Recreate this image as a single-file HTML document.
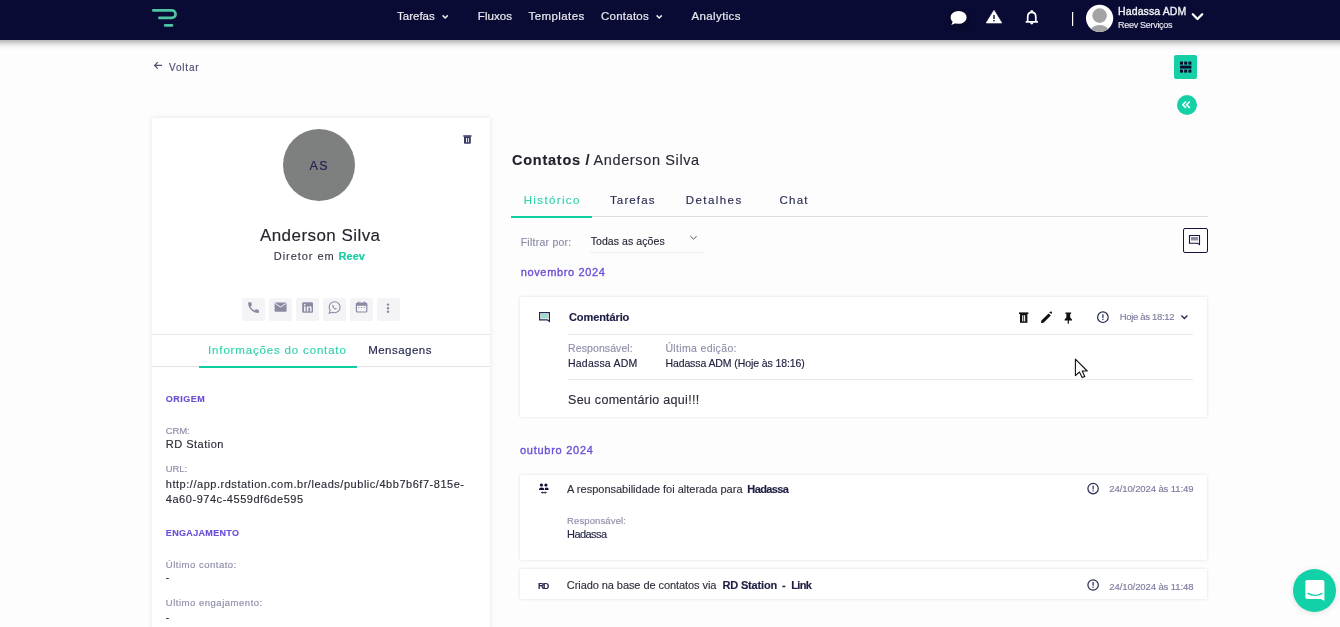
<!DOCTYPE html>
<html><head><meta charset="utf-8"><title>Reev - Anderson Silva</title>
<style>
*{margin:0;padding:0;box-sizing:border-box}
html,body{width:1340px;height:627px;overflow:hidden;background:#fdfdfd;font-family:"Liberation Sans",sans-serif}
.t{position:absolute;white-space:nowrap;line-height:1;-webkit-text-stroke-width:0.15px}
.abs{position:absolute}
svg{position:absolute;overflow:visible}
#nav{position:absolute;left:-30px;top:0;width:1400px;height:40px;background:#0a0b34;box-shadow:0 2px 7px rgba(0,0,0,0.4)}
.card{position:absolute;background:#fff;box-shadow:0 0 3px rgba(0,0,0,0.12)}
.btn{position:absolute;top:298px;width:23px;height:23px;background:#f4f4f6;border-radius:2px}
.hl{position:absolute;height:1px;background:#e4e4ea}
</style></head><body>
<div id="nav"></div>
<!-- logo -->
<svg width="1340" height="40" style="left:0;top:0">
  <path d="M153.3 10.4 H171.8 A3.75 3.75 0 0 1 171.8 17.9 H159.4" fill="none" stroke="#4ec4a2" stroke-width="2.7" stroke-linecap="round"/>
  <path d="M165.2 25.4 H172" fill="none" stroke="#4ec4a2" stroke-width="2.7" stroke-linecap="round"/>
  <!-- nav chevrons -->
  <path d="M442.6 15.4 L445.2 18 L447.8 15.4" fill="none" stroke="#e9e9f0" stroke-width="1.5"/>
  <path d="M656.6 15.4 L659.2 18 L661.8 15.4" fill="none" stroke="#e9e9f0" stroke-width="1.5"/>
  <!-- chat bubble -->
  <circle cx="958.5" cy="20.3" r="11.3" fill="#08092b"/>
  <ellipse cx="958.6" cy="17.4" rx="8" ry="6.4" fill="#fff"/>
  <path d="M953 21 L951.3 25 L957 22.5 Z" fill="#fff"/>
  <!-- warning -->
  <path d="M994 10.3 L1001.8 23 H986.2 Z" fill="#fff" stroke="#fff" stroke-width="0.6" stroke-linejoin="round"/>
  <rect x="993.3" y="15" width="1.4" height="4" fill="#0a0b34"/>
  <rect x="993.3" y="20" width="1.4" height="1.4" fill="#0a0b34"/>
  <!-- bell -->
  <path d="M1027.7 21.4 V17 C1027.7 14.1 1029.3 12.4 1031.75 12.4 C1034.2 12.4 1035.8 14.1 1035.8 17 V21.4" fill="none" stroke="#fff" stroke-width="1.7"/>
  <rect x="1025.5" y="21" width="12.6" height="1.8" rx="0.7" fill="#fff"/>
  <rect x="1030.4" y="10.2" width="2.8" height="2.6" rx="1" fill="#fff"/>
  <path d="M1030.2 22.6 H1033.3 A1.55 2 0 0 1 1030.2 22.6 Z" fill="#fff"/>
  <!-- separator -->
  <rect x="1072" y="12" width="1.2" height="14" fill="#fff"/>
  <!-- avatar -->
  <circle cx="1099.6" cy="18.3" r="13.6" fill="#fff"/>
  <circle cx="1099.6" cy="15.6" r="7.3" fill="#a4a4a4"/>
  <clipPath id="avc"><circle cx="1099.6" cy="18.3" r="13.6"/></clipPath>
  <ellipse cx="1099.6" cy="32" rx="9.5" ry="7" fill="#a4a4a4" clip-path="url(#avc)"/>
  <!-- big chevron -->
  <path d="M1192.8 14.3 L1197.5 19 L1202.2 14.3" fill="none" stroke="#fff" stroke-width="2.3" stroke-linecap="round" stroke-linejoin="round"/>
</svg>

<!-- top right buttons -->
<div class="abs" style="left:1174px;top:55px;width:23px;height:24px;background:#15d0a6;border-radius:2px"></div>
<svg width="24" height="24" style="left:1174px;top:55px">
  <rect x="6" y="6.6" width="3" height="3" fill="#0b0b30"/>
  <rect x="10.2" y="6.6" width="3" height="3" fill="#0b0b30"/>
  <rect x="14.4" y="6.6" width="3" height="3" fill="#0b0b30"/>
  <rect x="6" y="10.6" width="11.4" height="3" fill="#0b0b30"/>
  <rect x="6" y="14.6" width="3" height="3" fill="#0b0b30"/>
  <rect x="10.2" y="14.6" width="3" height="3" fill="#0b0b30"/>
  <rect x="14.4" y="14.6" width="3" height="3" fill="#0b0b30"/>
</svg>
<svg width="22" height="22" style="left:1176px;top:94px">
  <circle cx="11" cy="11" r="10" fill="#15d0a6"/>
  <path d="M10 7.5 L6.8 10.7 L10 13.9 M13.8 7.5 L10.6 10.7 L13.8 13.9" fill="none" stroke="#fff" stroke-width="1.6"/>
</svg>

<!-- back arrow -->
<svg width="12" height="12" style="left:153px;top:59px">
  <path d="M9 6.4 H1.6 M4.8 3.2 L1.6 6.4 L4.8 9.6" fill="none" stroke="#4b4e70" stroke-width="1.2"/>
</svg>

<!-- left card -->
<div class="card" style="left:152px;top:118px;width:338px;height:520px;box-shadow:0 0 5px rgba(0,0,0,0.1)"></div>
<svg width="12" height="12" style="left:462px;top:134px">
  <rect x="1.2" y="1.2" width="8.4" height="1.5" rx="0.4" fill="#363a62"/>
  <path d="M2 2.5 H8.8 V8.8 Q8.8 9.7 7.9 9.7 H2.9 Q2 9.7 2 8.8 Z" fill="#363a62"/>
  <rect x="4" y="4" width="0.9" height="4.3" fill="#fff"/>
  <rect x="5.9" y="4" width="0.9" height="4.3" fill="#fff"/>
</svg>
<div class="abs" style="left:283px;top:129px;width:72px;height:72px;border-radius:50%;background:#7e7f7f"></div>
<div class="btn" style="left:242px"></div>
<div class="btn" style="left:269px"></div>
<div class="btn" style="left:296px"></div>
<div class="btn" style="left:323px"></div>
<div class="btn" style="left:350px"></div>
<div class="btn" style="left:377px"></div>
<svg width="200" height="30" style="left:230px;top:295px">
  <!-- phone -->
  <path transform="translate(16.3 5.4) scale(0.6)" d="M20.01 15.38c-1.23 0-2.42-.2-3.53-.56-.35-.12-.74-.03-1.01.24l-1.57 1.97c-2.83-1.35-5.48-3.9-6.89-6.83l1.95-1.66c.27-.28.35-.67.24-1.02-.37-1.11-.56-2.3-.56-3.53 0-.54-.45-.99-.99-.99H4.19C3.65 3 3 3.24 3 3.99 3 13.28 10.73 21 20.01 21c.71 0 .99-.63.99-1.18v-3.45c0-.54-.45-.99-.99-.99z" fill="#8a8aa2"/>
<g transform="translate(0 -1)">
  <!-- mail -->
  <rect x="44.6" y="8.6" width="12" height="9.2" rx="0.8" fill="#8a8aa2"/>
  <path d="M44.8 9.2 L50.6 13 L56.4 9.2" fill="none" stroke="#f4f4f6" stroke-width="1"/>
  <!-- linkedin -->
  <rect x="72.2" y="8.2" width="10.8" height="10.6" rx="1.2" fill="#8a8aa2"/>
  <rect x="74" y="12.4" width="1.5" height="5" fill="#f4f4f6"/>
  <circle cx="74.75" cy="10.6" r="0.85" fill="#f4f4f6"/>
  <path d="M76.8 12.4 H78.2 V13.2 C78.6 12.5 79.3 12.2 80 12.2 C81.2 12.2 81.6 13 81.6 14.2 V17.4 H80.1 V14.6 C80.1 14 79.9 13.6 79.3 13.6 C78.6 13.6 78.3 14.1 78.3 14.7 V17.4 H76.8 Z" fill="#f4f4f6"/>
  <!-- whatsapp -->
  <path d="M104.6 7.8 C101.5 7.8 99.2 10.2 99.2 13.2 C99.2 14.3 99.5 15.3 100.1 16.2 L99.2 19.2 L102.3 18.3 C103 18.7 103.8 18.8 104.6 18.8 C107.7 18.8 110 16.4 110 13.4 C110 10.3 107.7 7.8 104.6 7.8 Z" fill="none" stroke="#8a8aa2" stroke-width="1.1"/>
  <path d="M102.6 11 C102.3 11.3 102.2 11.7 102.3 12.2 C102.6 13.6 103.9 15 105.3 15.4 C105.8 15.5 106.3 15.4 106.6 15.1 L106.7 14.5 L105.6 13.9 L105.1 14.4 C104.4 14.1 103.8 13.5 103.5 12.8 L104 12.3 L103.4 11.1 Z" fill="#8a8aa2"/>
  <!-- calendar -->
  <rect x="126.4" y="9" width="10.4" height="9" rx="1" fill="none" stroke="#8a8aa2" stroke-width="1.2"/>
  <rect x="126.4" y="9" width="10.4" height="2.8" fill="#8a8aa2"/>
  <rect x="128.2" y="7.6" width="1.2" height="2" fill="#8a8aa2"/>
  <rect x="133.8" y="7.6" width="1.2" height="2" fill="#8a8aa2"/>
  <rect x="128.4" y="13" width="1" height="1" fill="#8a8aa2"/>
  <rect x="131.1" y="13" width="1" height="1" fill="#8a8aa2"/>
  <rect x="133.8" y="13" width="1" height="1" fill="#8a8aa2"/>
</g>
  <!-- dots -->
  <circle cx="158" cy="9.6" r="1.2" fill="#8a8aa2"/>
  <circle cx="158" cy="13.2" r="1.2" fill="#8a8aa2"/>
  <circle cx="158" cy="16.8" r="1.2" fill="#8a8aa2"/>
</svg>
<div class="hl" style="left:152px;top:334px;width:338px;background:#e6e6eb"></div>
<div class="hl" style="left:152px;top:366px;width:338px;background:#e3e3e8"></div>
<div class="abs" style="left:199px;top:366px;width:158px;height:2px;background:#0dcfa2"></div>

<!-- right column -->
<div class="hl" style="left:511px;top:216px;width:697px;background:#dcdce2"></div>
<div class="abs" style="left:511px;top:216px;width:81px;height:2px;background:#0dcfa2"></div>
<div class="hl" style="left:590px;top:252px;width:114px;background:#ededf1"></div>
<svg width="10" height="8" style="left:689px;top:234px">
  <path d="M1.3 2 L4.5 5.2 L7.7 2" fill="none" stroke="#55566e" stroke-width="1"/>
</svg>
<div class="abs" style="left:1183px;top:228px;width:25px;height:25px;border:1.3px solid #15163f;border-radius:2px"></div>
<svg width="14" height="12" style="left:1188px;top:234px">
  <path d="M1.5 1.5 H11.5 V10.6 L9.5 9.3 H1.5 Z" fill="none" stroke="#15163f" stroke-width="1.1"/>
  <rect x="3" y="3" width="7" height="3.5" fill="#8b8ca6"/>
</svg>

<!-- card comment -->
<div class="card" style="left:520px;top:297px;width:687px;height:120px"></div>
<svg width="14" height="12" style="left:538px;top:311px">
  <path d="M1.6 1.6 H11.4 V10.4 L9.2 8.8 H1.6 Z" fill="none" stroke="#24264f" stroke-width="1.2"/>
  <rect x="3" y="3" width="7" height="4.4" fill="#84e0c8"/>
  <rect x="3" y="4.4" width="7" height="1.6" fill="#b5d8d2"/>
</svg>
<div class="hl" style="left:568px;top:334px;width:625px;background:#e8e8ed"></div>
<div class="hl" style="left:568px;top:379px;width:625px;background:#e8e8ed"></div>
<svg width="200" height="16" style="left:1010px;top:310px">
  <!-- trash -->
  <rect x="9" y="2.4" width="9.4" height="1.6" fill="#111"/>
  <path d="M10 4 H17.4 V12.8 H10 Z" fill="#111"/>
  <rect x="12.2" y="5.2" width="1.1" height="6.2" fill="#fff"/>
  <rect x="14.1" y="5.2" width="1.1" height="6.2" fill="#fff"/>
  <!-- pencil -->
  <path d="M31 13 L31.4 10.6 L38.6 3.4 L40.8 5.6 L33.6 12.8 Z" fill="#111"/>
  <path d="M39.2 2.8 L40.2 1.8 C40.6 1.4 41.2 1.4 41.6 1.8 L41.8 2 C42.2 2.4 42.2 3 41.8 3.4 L41.4 3.8 Z" fill="#111"/>
  <!-- pin -->
  <path d="M55.4 2.4 H61.2 V3.8 H60.2 V7.6 L62 9.4 V10.4 H58.9 V13.8 H57.7 V10.4 H54.6 V9.4 L56.4 7.6 V3.8 H55.4 Z" fill="#111"/>
  <!-- info circle -->
  <circle cx="92.9" cy="7.2" r="5.3" fill="none" stroke="#272a52" stroke-width="1.2"/>
  <rect x="92.3" y="4.2" width="1.2" height="3.8" fill="#272a52"/>
  <rect x="92.3" y="8.8" width="1.2" height="1.2" fill="#272a52"/>
  <!-- chevron -->
  <path d="M171.4 5.5 L174.4 8.5 L177.4 5.5" fill="none" stroke="#272a52" stroke-width="1.4"/>
</svg>
<!-- cursor -->
<svg width="20" height="24" style="left:1070px;top:355px">
  <path d="M5.4 4.2 V20.6 L9.4 17 L12.2 22.6 L14.8 21.4 L12.2 16 H17.2 Z" fill="#fff" stroke="#111" stroke-width="1.1" stroke-linejoin="round"/>
</svg>

<!-- card 2 -->
<div class="card" style="left:520px;top:475px;width:687px;height:85px"></div>
<svg width="14" height="14" style="left:537px;top:482px">
  <circle cx="4.4" cy="3" r="1.6" fill="#0c0d36"/>
  <circle cx="8.9" cy="3" r="1.6" fill="#0c0d36"/>
  <path d="M2 8 C2 6.2 3 5.5 4.6 5.5 C6.2 5.5 7.2 6.2 7.2 8 Z" fill="#0c0d36"/>
  <path d="M7.8 8 C7.8 6.4 8.2 5.5 9.4 5.5 C10.8 5.5 11.6 6.2 11.6 8 Z" fill="#0c0d36"/>
  <path d="M4.6 10.6 H9.2 M5.5 9.7 L4.6 10.6 L5.5 11.5 M8.3 9.7 L9.2 10.6 L8.3 11.5" fill="none" stroke="#0c0d36" stroke-width="0.9"/>
</svg>

<!-- card 3 -->
<div class="card" style="left:520px;top:569px;width:687px;height:30px"></div>
<svg width="16" height="200" style="left:1086px;top:480px">
  <circle cx="7.1" cy="8.6" r="5.2" fill="none" stroke="#272a52" stroke-width="1.2"/>
  <rect x="6.5" y="5.6" width="1.2" height="3.8" fill="#272a52"/>
  <rect x="6.5" y="10.2" width="1.2" height="1.2" fill="#272a52"/>
  <circle cx="7.1" cy="105" r="5.2" fill="none" stroke="#272a52" stroke-width="1.2"/>
  <rect x="6.5" y="102" width="1.2" height="3.8" fill="#272a52"/>
  <rect x="6.5" y="106.6" width="1.2" height="1.2" fill="#272a52"/>
</svg>

<!-- intercom -->
<div class="abs" style="left:1293px;top:569px;width:43px;height:43px;border-radius:50%;background:#12d0a7;box-shadow:0 1px 6px rgba(0,0,0,0.12)"></div>
<svg width="24" height="24" style="left:1303px;top:578px">
  <path d="M4.2 2 H19.4 C20.6 2 21.4 2.8 21.4 4 V22.8 L17.6 21 H4.2 C3 21 2.4 20.2 2.4 19 V4 C2.4 2.8 3 2 4.2 2 Z" fill="#fff"/>
  <path d="M5 15.4 C8.6 18 15 18 19 15.4" fill="none" stroke="#12d0a7" stroke-width="1.3" stroke-linecap="round"/>
</svg>

<div id="txt" style="position:absolute;left:0;top:0;width:1340px;height:627px;will-change:transform">
<div class="t" style="left:397.00px;top:10.67px;font-size:11.5px;font-weight:400;color:#e9e9f0;letter-spacing:0.006px;-webkit-text-stroke:0.2px #e9e9f0;">Tarefas</div>
<div class="t" style="left:477.80px;top:10.67px;font-size:11.5px;font-weight:400;color:#e9e9f0;letter-spacing:0.076px;-webkit-text-stroke:0.2px #e9e9f0;">Fluxos</div>
<div class="t" style="left:528.60px;top:10.67px;font-size:11.5px;font-weight:400;color:#e9e9f0;letter-spacing:0.405px;-webkit-text-stroke:0.2px #e9e9f0;">Templates</div>
<div class="t" style="left:601.00px;top:10.67px;font-size:11.5px;font-weight:400;color:#e9e9f0;letter-spacing:0.246px;-webkit-text-stroke:0.2px #e9e9f0;">Contatos</div>
<div class="t" style="left:691.60px;top:10.67px;font-size:11.5px;font-weight:400;color:#e9e9f0;letter-spacing:0.354px;-webkit-text-stroke:0.2px #e9e9f0;">Analytics</div>
<div class="t" style="left:1118.10px;top:5.71px;font-size:10.5px;font-weight:400;color:#f2f2f6;letter-spacing:0.096px;-webkit-text-stroke:0.35px #f2f2f6;">Hadassa ADM</div>
<div class="t" style="left:1118.00px;top:21.38px;font-size:9px;font-weight:400;color:#e6e6ee;letter-spacing:-0.293px;">Reev Serviços</div>
<div class="t" style="left:169.00px;top:63.34px;font-size:10px;font-weight:400;color:#4b4e70;letter-spacing:0.812px;">Voltar</div>
<div class="t" style="left:309.60px;top:160.22px;font-size:12.5px;font-weight:400;color:#1f2150;letter-spacing:1.263px;">AS</div>
<div class="t" style="left:259.90px;top:226.81px;font-size:17px;font-weight:400;color:#25252f;letter-spacing:0.447px;">Anderson Silva</div>
<div class="t" style="left:273.80px;top:250.69px;font-size:11px;font-weight:400;color:#3a3a48;letter-spacing:0.947px;">Diretor em</div>
<div class="t" style="left:338.60px;top:250.69px;font-size:11px;font-weight:700;color:#14cfa3;letter-spacing:0.007px;">Reev</div>
<div class="t" style="left:208.10px;top:345.27px;font-size:11.5px;font-weight:400;color:#2fd2ac;letter-spacing:0.834px;">Informações do contato</div>
<div class="t" style="left:368.20px;top:345.27px;font-size:11.5px;font-weight:400;color:#262850;letter-spacing:0.474px;">Mensagens</div>
<div class="t" style="left:165.80px;top:394.68px;font-size:9px;font-weight:700;color:#6d4fd6;letter-spacing:0.479px;">ORIGEM</div>
<div class="t" style="left:165.80px;top:426.06px;font-size:9.5px;font-weight:400;color:#8d8daa;letter-spacing:-0.145px;">CRM:</div>
<div class="t" style="left:165.80px;top:438.69px;font-size:11px;font-weight:400;color:#2a2a38;letter-spacing:0.492px;">RD Station</div>
<div class="t" style="left:165.80px;top:464.16px;font-size:9.5px;font-weight:400;color:#8d8daa;letter-spacing:-0.102px;">URL:</div>
<div class="t" style="left:165.80px;top:479.09px;font-size:11px;font-weight:400;color:#2a2a38;letter-spacing:0.528px;">http://app.rdstation.com.br/leads/public/4bb7b6f7-815e-</div>
<div class="t" style="left:165.80px;top:494.29px;font-size:11px;font-weight:400;color:#2a2a38;letter-spacing:0.539px;">4a60-974c-4559df6de595</div>
<div class="t" style="left:165.80px;top:528.78px;font-size:9px;font-weight:700;color:#6d4fd6;letter-spacing:0.336px;">ENGAJAMENTO</div>
<div class="t" style="left:165.80px;top:559.96px;font-size:9.5px;font-weight:400;color:#8d8daa;letter-spacing:0.506px;">Último contato:</div>
<div class="t" style="left:165.80px;top:572.83px;font-size:10px;font-weight:400;color:#2a2a38;letter-spacing:0.000px;">-</div>
<div class="t" style="left:165.80px;top:597.76px;font-size:9.5px;font-weight:400;color:#8d8daa;letter-spacing:0.517px;">Ultimo engajamento:</div>
<div class="t" style="left:165.80px;top:613.33px;font-size:10px;font-weight:400;color:#2a2a38;letter-spacing:0.000px;">-</div>
<div class="t" style="left:512.00px;top:152.73px;font-size:14.5px;font-weight:700;color:#23232d;letter-spacing:0.749px;">Contatos /</div>
<div class="t" style="left:593.50px;top:152.73px;font-size:14.5px;font-weight:400;color:#2a2a36;letter-spacing:0.626px;">Anderson Silva</div>
<div class="t" style="left:523.70px;top:194.97px;font-size:11.5px;font-weight:400;color:#2fd2ac;letter-spacing:1.371px;">Histórico</div>
<div class="t" style="left:610.00px;top:194.97px;font-size:11.5px;font-weight:400;color:#2a2c52;letter-spacing:1.123px;">Tarefas</div>
<div class="t" style="left:685.80px;top:194.97px;font-size:11.5px;font-weight:400;color:#2a2c52;letter-spacing:1.423px;">Detalhes</div>
<div class="t" style="left:779.60px;top:194.97px;font-size:11.5px;font-weight:400;color:#2a2c52;letter-spacing:1.201px;">Chat</div>
<div class="t" style="left:520.70px;top:236.91px;font-size:10.5px;font-weight:400;color:#8a8aa6;letter-spacing:0.243px;">Filtrar por:</div>
<div class="t" style="left:590.70px;top:236.11px;font-size:10.5px;font-weight:400;color:#262636;letter-spacing:0.076px;">Todas as ações</div>
<div class="t" style="left:520.70px;top:266.59px;font-size:11px;font-weight:400;color:#6d4fd6;letter-spacing:0.648px;-webkit-text-stroke:0.35px #6d4fd6;">novembro 2024</div>
<div class="t" style="left:569.00px;top:311.69px;font-size:11px;font-weight:700;color:#1b1c46;letter-spacing:-0.089px;">Comentário</div>
<div class="t" style="left:1119.70px;top:312.06px;font-size:9.5px;font-weight:400;color:#7c7c9e;letter-spacing:-0.320px;">Hoje às 18:12</div>
<div class="t" style="left:568.10px;top:342.61px;font-size:10.5px;font-weight:400;color:#8e8eaa;letter-spacing:0.091px;">Responsável:</div>
<div class="t" style="left:665.40px;top:342.61px;font-size:10.5px;font-weight:400;color:#8e8eaa;letter-spacing:0.353px;">Última edição:</div>
<div class="t" style="left:568.00px;top:358.11px;font-size:10.5px;font-weight:400;color:#20213f;letter-spacing:0.206px;">Hadassa ADM</div>
<div class="t" style="left:665.40px;top:358.11px;font-size:10.5px;font-weight:400;color:#20213f;letter-spacing:-0.092px;">Hadassa ADM (Hoje às 18:16)</div>
<div class="t" style="left:568.00px;top:393.72px;font-size:12.5px;font-weight:400;color:#2d2d3b;letter-spacing:0.290px;">Seu comentário aqui!!!</div>
<div class="t" style="left:520.00px;top:445.39px;font-size:11px;font-weight:400;color:#6d4fd6;letter-spacing:0.735px;-webkit-text-stroke:0.35px #6d4fd6;">outubro 2024</div>
<div class="t" style="left:567.10px;top:483.99px;font-size:11px;font-weight:400;color:#30303f;letter-spacing:-0.003px;">A responsabilidade foi alterada para</div>
<div class="t" style="left:747.30px;top:483.99px;font-size:11px;font-weight:700;color:#1e1f42;letter-spacing:-0.606px;">Hadassa</div>
<div class="t" style="left:1109.30px;top:484.46px;font-size:9.5px;font-weight:400;color:#7c7c9e;letter-spacing:-0.097px;">24/10/2024 às 11:49</div>
<div class="t" style="left:567.00px;top:516.06px;font-size:9.5px;font-weight:400;color:#8e8eaa;letter-spacing:0.125px;">Responsável:</div>
<div class="t" style="left:567.00px;top:528.69px;font-size:11px;font-weight:400;color:#262848;letter-spacing:-0.549px;">Hadassa</div>
<div class="t" style="left:538.00px;top:582.34px;font-size:8.7px;font-weight:700;color:#2a2c52;letter-spacing:-1.374px;">RD</div>
<div class="t" style="left:566.80px;top:580.09px;font-size:11px;font-weight:400;color:#30303f;letter-spacing:-0.070px;">Criado na base de contatos via</div>
<div class="t" style="left:722.50px;top:580.09px;font-size:11px;font-weight:700;color:#1e1f42;letter-spacing:-0.167px;">RD Station</div>
<div class="t" style="left:782.00px;top:580.09px;font-size:11px;font-weight:700;color:#1e1f42;letter-spacing:0.000px;">-</div>
<div class="t" style="left:791.30px;top:580.09px;font-size:11px;font-weight:700;color:#1e1f42;letter-spacing:-0.665px;">Link</div>
<div class="t" style="left:1109.30px;top:581.76px;font-size:9.5px;font-weight:400;color:#7c7c9e;letter-spacing:-0.097px;">24/10/2024 às 11:48</div>
</div>
</body></html>
